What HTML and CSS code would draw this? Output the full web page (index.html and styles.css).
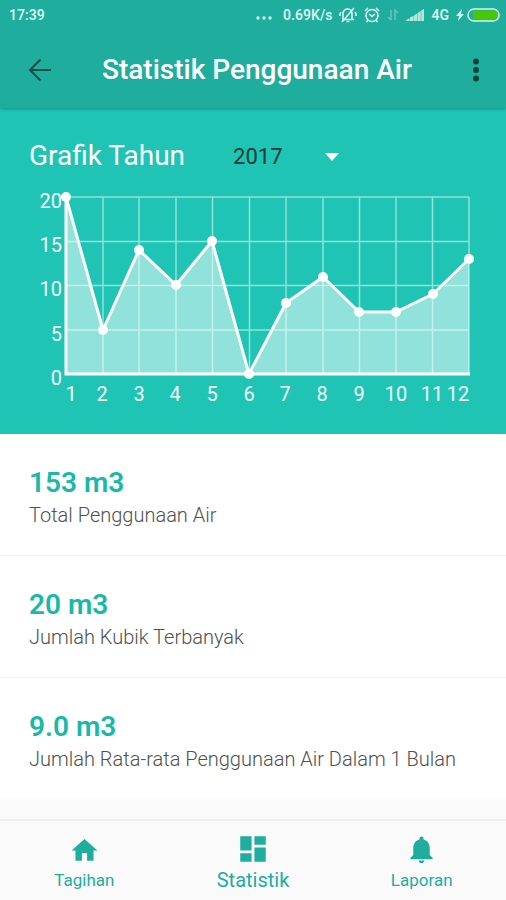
FILE: index.html
```html
<!DOCTYPE html>
<html lang="id">
<head>
<meta charset="utf-8">
<meta name="viewport" content="width=device-width, initial-scale=1">
<title>Statistik Penggunaan Air</title>
<link rel="stylesheet" href="styles.css">
</head>
<body>
<div class="screen">
  <header class="top">
    <div class="status">
      <span>17:39</span>
      <div class="status-right">
        <svg class="dots" width="16" height="16" viewBox="0 0 16 16"><circle cx="2" cy="11" r="1.700"/><circle cx="8" cy="11" r="1.700"/><circle cx="14" cy="11" r="1.700"/></svg>
        <span class="speed">0.69K/s</span>
        <svg class="muted" width="18" height="16" viewBox="0 0 18 16" fill="none" stroke="currentColor" stroke-width="1.6"><path d="M4 12V7a4.500 4.500 0 0 1 9-1v6M3 12.500h12M7.500 14.500h3M8.500 2V1M15 1L3 15M2 5L1 7v2M16 5l1 2v2"/></svg>
        <svg class="alarm" width="16" height="16" viewBox="0 0 16 16" fill="none" stroke="currentColor" stroke-width="1.6"><circle cx="8" cy="8.500" r="6"/><path d="M5 7l3 2.500L11 7M1 4l3-3M15 4l-3-3M4 13l-1.500 2M12 13l1.500 2"/></svg>
        <svg class="transfer" width="12" height="16" viewBox="0 0 12 16" fill="none" stroke="currentColor" stroke-width="1.6"><path d="M4 3v10M1 10l3 3M8 13V3l3 3"/></svg>
        <svg class="signal" width="18" height="16" viewBox="0 0 18 16"><path opacity=".6" d="M0 14L18 2v12z"/><path d="M0 14v-1l3-1.500V14zM4 14v-3.500l3-1.500v5zM8 14V8.500L11 6.500V14zM12 14V6L14.500 4v10zM15.500 14V3.500L18 2v12z"/></svg>
        <span>4G</span>
        <svg class="battery" width="44" height="16" viewBox="0 0 44 16"><path d="M6 2L0 9h3l-1 5 6-7H5z"/><rect x="12" y="2" width="31" height="12" rx="6" fill="none" stroke="currentColor" stroke-width="1.500"/><path d="M17 3.500h20.500a4.500 4.500 0 0 1 0 9H17z" fill="#49c707"/></svg>
      </div>
    </div>
    <div class="appbar">
      <button class="icon-btn" aria-label="Kembali"><svg width="24" height="24" viewBox="0 0 24 24" fill="none" stroke="currentColor" stroke-width="2"><path d="M23 12H2M12.500 1.500L2 12l10.500 10.500"/></svg></button>
      <h1>Statistik Penggunaan Air</h1>
      <button class="icon-btn" aria-label="Menu"><svg width="8" height="24" viewBox="0 0 8 24" fill="currentColor"><circle cx="4" cy="3.500" r="3"/><circle cx="4" cy="12" r="3"/><circle cx="4" cy="20.500" r="3"/></svg></button>
    </div>
  </header>

  <main>
    <section class="graph">
      <div class="graph-head">
        <label for="year">Grafik Tahun</label>
        <div class="year">
          <select id="year"><option>2017</option></select>
          <svg width="14" height="8" viewBox="0 0 14 8"><path d="M0 0h14L7 8z"/></svg>
        </div>
      </div>
      <svg class="chart" viewBox="0 0 506 224" role="img" aria-label="Grafik Tahun 2017">
        <path class="area" d="M66 7L103 140 139 60 176 95 212 51 249 184 286 113 323 87 359 122 396 122 433 104 469 69V184H66z"/>
        <path class="grid" d="M66 7H469M66 51.500H469M66 95.500H469M66 140H469M103 7V184M139 7V184M176 7V184M212.500 7V184M249.500 7V184M286 7V184M323 7V184M359.500 7V184M396 7V184M432.500 7V184M469 7V184"/>
        <path class="axis" d="M66 7V184H470"/>
        <path class="line" d="M66 7L103 140 139 60 176 95 212 51 249 184 286 113 323 87 359 122 396 122 433 104 469 69"/>
        <g fill="#fff"><circle cx="66" cy="7" r="5"/><circle cx="103" cy="140" r="5"/><circle cx="139" cy="60" r="5"/><circle cx="176" cy="95" r="5"/><circle cx="212" cy="51" r="5"/><circle cx="249" cy="184" r="5"/><circle cx="286" cy="113" r="5"/><circle cx="323" cy="87" r="5"/><circle cx="359" cy="122" r="5"/><circle cx="396" cy="122" r="5"/><circle cx="433" cy="104" r="5"/><circle cx="469" cy="69" r="5"/></g>
        <g class="tick tick-y"><text x="62" y="18">20</text><text x="62" y="62">15</text><text x="62" y="106">10</text><text x="62" y="151">5</text><text x="62" y="195">0</text></g>
        <g class="tick tick-x"><text x="71" y="211">1</text><text x="102" y="211">2</text><text x="139" y="211">3</text><text x="175" y="211">4</text><text x="212" y="211">5</text><text x="249" y="211">6</text><text x="285" y="211">7</text><text x="322" y="211">8</text><text x="359" y="211">9</text><text x="396" y="211">10</text><text x="432" y="211">11</text><text x="458" y="211">12</text></g>
      </svg>
    </section>

    <section class="stats">
      <div class="stat"><strong>153 m3</strong><p>Total Penggunaan Air</p></div>
      <div class="stat"><strong>20 m3</strong><p>Jumlah Kubik Terbanyak</p></div>
      <div class="stat"><strong>9.0 m3</strong><p>Jumlah Rata-rata Penggunaan Air Dalam 1 Bulan</p></div>
    </section>
  </main>

  <nav class="tabs">
    <a href="#tagihan"><svg width="31" height="31" viewBox="0 0 24 24"><path d="M10 20v-6h4v6h5v-8h3L12 3 2 12h3v8z"/></svg><span>Tagihan</span></a>
    <a class="active" href="#statistik" aria-current="page"><svg width="34" height="34" viewBox="0 0 24 24"><path d="M3 13h8V3H3v10zm0 8h8v-6H3v6zm10 0h8V11h-8v10zm0-18v6h8V3h-8z"/></svg><span>Statistik</span></a>
    <a href="#laporan"><svg width="33" height="33" viewBox="0 0 24 24"><path d="M12 22c1.100 0 2-.9 2-2h-4c0 1.100.89 2 2 2zm6-6v-5c0-3.070-1.640-5.640-4.500-6.320V4c0-.83-.67-1.500-1.500-1.500s-1.500.67-1.500 1.500v.68C7.630 5.360 6 7.920 6 11v5l-2 2v1h16v-1l-2-2z"/></svg><span>Laporan</span></a>
  </nav>
</div>
</body>
</html>
```
FILE: styles.css
```css
* { box-sizing: border-box; }

body {
  margin: 0;
  background: #fafafa;
  font-family: Roboto, "Liberation Sans", sans-serif;
}

h1, p { margin: 0; }

svg { display: block; flex: none; }

.screen {
  display: flex;
  flex-direction: column;
  min-height: 100vh;
}

.top {
  position: relative;
  background: #1fad9e;
  box-shadow: 0 1px 3px rgba(0, 70, 60, 0.4);
}

.status {
  display: flex;
  justify-content: space-between;
  align-items: center;
  height: 30px;
  padding: 0 6px 0 9px;
  color: #d5f5ef;
  font-size: 14px;
  font-weight: 600;
}

.status-right {
  display: flex;
  align-items: center;
  gap: 7px;
}

.status-right svg { fill: currentColor; }
.status-right .muted,
.status-right .alarm,
.status-right .transfer { fill: none; }
.dots { align-self: flex-end; }
.speed { padding-left: 4px; }
.transfer { opacity: 0.35; }
.signal { opacity: 0.8; }

.appbar {
  display: flex;
  align-items: center;
  height: 78px;
  padding: 2px 20px 0;
}

.appbar h1 {
  flex: 1;
  padding-left: 42px;
  color: #fff;
  font-size: 28px;
  font-weight: 500;
  line-height: 36px;
}

.icon-btn {
  display: flex;
  justify-content: center;
  width: 40px;
  padding: 8px 0;
  border: 0;
  background: none;
  color: #0d4e48;
}

.icon-btn:last-child { width: 20px; color: #0b403c; }

.graph {
  padding: 30px 0 20px;
  background: #20c4b4;
}

.graph-head {
  display: flex;
  align-items: center;
  gap: 48px;
  padding: 0 29px 16px;
  color: #fff;
  font-size: 28px;
  line-height: 36px;
}

.year {
  display: flex;
  align-items: center;
  position: relative;
  padding-top: 2px;
}

.year select {
  width: 106px;
  height: 34px;
  padding: 0;
  border: 0;
  appearance: none;
  background: none;
  color: #093c38;
  font: 22px/34px Roboto, sans-serif;
}

.year svg {
  position: absolute;
  right: 0;
  fill: #fff;
  pointer-events: none;
}

.chart { width: 100%; height: auto; }
.area { fill: #fff; opacity: 0.5; }
.grid { fill: none; stroke: #fff; stroke-width: 1.5px; opacity: 0.5; }
.axis { fill: none; stroke: #fff; stroke-width: 3px; }
.line { fill: none; stroke: #fff; stroke-width: 3px; stroke-linejoin: round; }
.tick { fill: #f4fffd; font-size: 20px; }
.tick-y { text-anchor: end; }
.tick-x { text-anchor: middle; }

.stats { background: #fff; }

.stat {
  padding: 31px 29px 26px;
  border-bottom: 1px solid #f0f0f0;
}

.stat:last-child { border-bottom: 0; }

.stat strong {
  display: block;
  color: #18b9a8;
  font-size: 28px;
  font-weight: 600;
  line-height: 36px;
}

.stat p {
  color: #505050;
  font-size: 20px;
  font-weight: 300;
  line-height: 28px;
}

.tabs {
  display: flex;
  height: 81px;
  margin-top: auto;
  border-top: 2px solid #f0f0f0;
  background: #fafafa;
}

.tabs a {
  display: flex;
  flex: 1;
  flex-direction: column;
  align-items: center;
  justify-content: flex-end;
  gap: 3px;
  padding-bottom: 9px;
  color: #1fad9e;
  font-size: 17px;
  line-height: 22px;
  text-decoration: none;
}

.tabs .active { font-size: 20px; }
.tabs svg { fill: currentColor; }
```
